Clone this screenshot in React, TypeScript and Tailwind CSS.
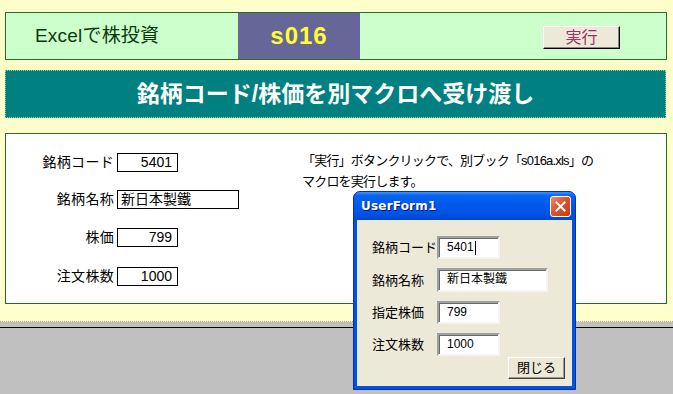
const font = "font-['Liberation_Sans','Noto_Sans_CJK_JP',sans-serif]";

const sheetRows = [
  { label: "銘柄コード", value: "5401", wide: false, gap: "mt-0" },
  { label: "銘柄名称", value: "新日本製鐵", wide: true, gap: "mt-[18px]" },
  { label: "株価", value: "799", wide: false, gap: "mt-[19px]" },
  { label: "注文株数", value: "1000", wide: false, gap: "mt-[20px]" },
];

const formRows = [
  { label: "銘柄コード", value: "5401", wide: false, caret: true, h: "h-[23px]" },
  { label: "銘柄名称", value: "新日本製鐵", wide: true, caret: false, h: "h-[24px]" },
  { label: "指定株価", value: "799", wide: false, caret: false, h: "h-[23px]" },
  { label: "注文株数", value: "1000", wide: false, caret: false, h: "h-[23px]" },
];

function CloseIcon() {
  return (
    <svg width="11" height="11" viewBox="0 0 11 11">
      <path d="M1.5 1.5 L9.5 9.5 M9.5 1.5 L1.5 9.5" stroke="white" strokeWidth="2" strokeLinecap="square" />
    </svg>
  );
}

function UserForm() {
  return (
    <div className="absolute left-[353px] top-[191px] w-[223px] h-[199px] flex flex-col rounded-t-[7px] border border-[#0a2fa8] bg-[#0054e3] overflow-hidden">
      <div className="h-[28px] shrink-0 flex items-center pl-[7px] pr-[4px] bg-[linear-gradient(180deg,#3d95ff_0%,#0a66f0_12%,#0058ee_45%,#0052e4_80%,#0046d0_100%)]">
        <span className="text-[12px] font-bold text-white tracking-[0.2px] [text-shadow:1px_1px_0_#0a1a6a] font-['DejaVu_Sans',sans-serif]">
          UserForm1
        </span>
        <div className="ml-auto w-[21px] h-[21px] rounded-[3px] border border-white bg-[linear-gradient(135deg,#f08a6a_0%,#e0532f_45%,#c43a1a_100%)] flex items-center justify-center">
          <CloseIcon />
        </div>
      </div>
      <div className="flex-1 mx-[3px] mb-[3px] bg-[#ece9d8] flex flex-col pt-[16px] pl-[15px] pr-[7px]">
        {formRows.map((r, i) => (
          <div key={i} className={`flex items-center ${i > 0 ? "mt-[9px]" : ""} ${r.h}`}>
            <span className="w-[65px] text-[13px] text-black leading-none">{r.label}</span>
            <div
              className={`${r.wide ? "w-[111px]" : "w-[63px]"} h-full bg-white border-2 border-t-[#a0a0a0] border-l-[#a0a0a0] border-b-[#f4f4f0] border-r-[#f4f4f0] shadow-[inset_1px_1px_0_#6a6a6a] pl-[8px] pt-[2px] flex items-start`}
            >
              <span className="text-[12px] leading-[15px] text-black">{r.value}</span>
              {r.caret && <span className="ml-[1px] mt-[1px] w-px h-[14px] bg-black" />}
            </div>
          </div>
        ))}
        <div className="mt-[1px] flex justify-end">
          <div className="w-[57px] h-[22px] bg-[#ece9d8] border border-t-white border-l-white border-b-[#404040] border-r-[#404040] shadow-[inset_-1px_-1px_0_#9a9890] flex items-center justify-center text-[13px] text-black">
            閉じる
          </div>
        </div>
      </div>
    </div>
  );
}

export default function App() {
  return (
    <div className={`relative w-[673px] h-[394px] overflow-hidden bg-[#ffffcc] flex flex-col ${font}`}>
      <div className="pt-[12px] pl-[5px] flex flex-col">
        {/* header */}
        <div className="w-[662px] h-[48px] border border-[#256d25] bg-[#ccffcc] flex">
          <div className="w-[232px] pl-[29px] flex items-center text-[19px] text-[#0b3a0b] tracking-[0.2px]">
            Excelで株投資
          </div>
          <div className="w-[122px] h-full bg-[#666699] flex items-center justify-center text-[24px] font-bold text-[#ffff33] tracking-[1px]">
            s016
          </div>
          <div className="ml-[183px] mt-[13px] w-[77px] h-[23px] bg-[#ece9d8] border border-t-white border-l-white border-b-black border-r-black shadow-[inset_-1px_-1px_0_#8a8880] flex items-center justify-center text-[16px] text-[#993366]">
            実行
          </div>
        </div>

        {/* title banner */}
        <div className="mt-[10px] w-[661px] h-[48px] bg-[#008080] border border-dotted border-[#8fe08f] flex items-center justify-center text-[23px] font-bold text-white">
          銘柄コード/株価を別マクロへ受け渡し
        </div>

        {/* sheet body */}
        <div className="mt-[15px] w-[662px] h-[171px] border border-[#256d25] bg-white flex">
          <div className="w-[296px] flex flex-col pt-[19px]">
            {sheetRows.map((r, i) => (
              <div key={i} className={`flex items-center h-[19px] ${r.gap}`}>
                <span className="w-[111px] pr-[3px] text-right text-[14px] tracking-[0.3px] text-black">{r.label}</span>
                <div
                  className={`${r.wide ? "w-[122px] justify-start pl-[3px]" : "w-[61px] justify-end pr-[5px]"} h-[19px] border border-black flex items-center text-[14px] text-black`}
                >
                  {r.value}
                </div>
              </div>
            ))}
          </div>
          <div className="pt-[16px] text-[13px] leading-[21px] text-black tracking-[-0.8px]">
            <p>「実行」ボタンクリックで、別ブック「s016a.xls」の</p>
            <p>マクロを実行します。</p>
          </div>
        </div>
      </div>

      {/* worksheet bottom / gray area */}
      <div className="mt-[17px] h-px border-t border-dotted border-[#b89a9a]" />
      <div className="h-[5px] bg-[#c0c0c0]" />
      <div className="h-px bg-black" />
      <div className="flex-1 bg-[#c0c0c0]" />

      <UserForm />
    </div>
  );
}
